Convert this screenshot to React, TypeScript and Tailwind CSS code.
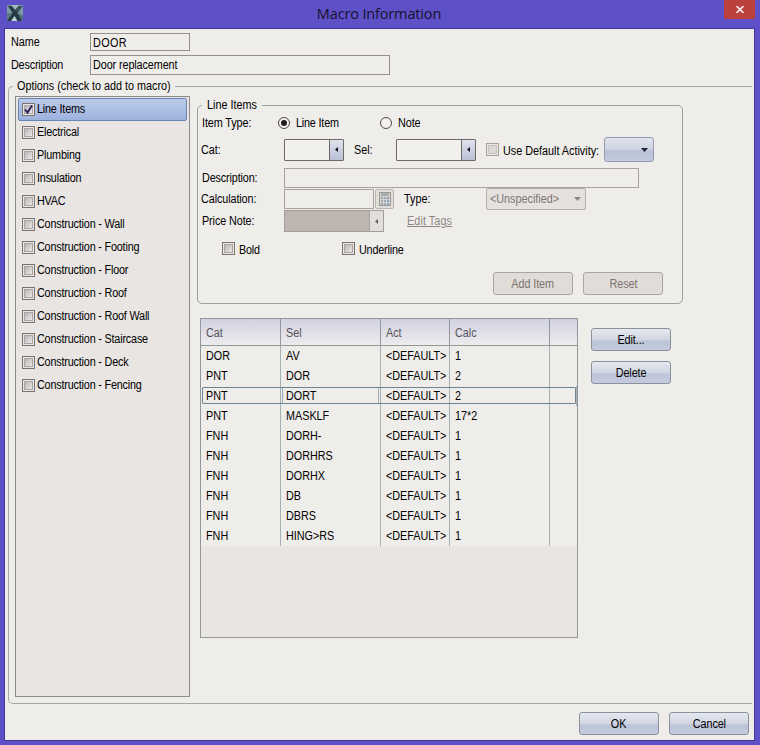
import React, { useState } from 'react';
import clsx from 'clsx';

type LineItem = {
  cat: string;
  sel: string;
  act: string;
  calc: string;
};

const options = [
  'Line Items',
  'Electrical',
  'Plumbing',
  'Insulation',
  'HVAC',
  'Construction - Wall',
  'Construction - Footing',
  'Construction - Floor',
  'Construction - Roof',
  'Construction - Roof Wall',
  'Construction - Staircase',
  'Construction - Deck',
  'Construction - Fencing',
];

const items: LineItem[] = [
  { cat: 'DOR', sel: 'AV', act: '<DEFAULT>', calc: '1' },
  { cat: 'PNT', sel: 'DOR', act: '<DEFAULT>', calc: '2' },
  { cat: 'PNT', sel: 'DORT', act: '<DEFAULT>', calc: '2' },
  { cat: 'PNT', sel: 'MASKLF', act: '<DEFAULT>', calc: '17*2' },
  { cat: 'FNH', sel: 'DORH-', act: '<DEFAULT>', calc: '1' },
  { cat: 'FNH', sel: 'DORHRS', act: '<DEFAULT>', calc: '1' },
  { cat: 'FNH', sel: 'DORHX', act: '<DEFAULT>', calc: '1' },
  { cat: 'FNH', sel: 'DB', act: '<DEFAULT>', calc: '1' },
  { cat: 'FNH', sel: 'DBRS', act: '<DEFAULT>', calc: '1' },
  { cat: 'FNH', sel: 'HING>RS', act: '<DEFAULT>', calc: '1' },
];

type TextProps = {
  children: React.ReactNode;
  className?: string;
};

// narrow dialog text
const Text = ({ children, className, centered }: TextProps & { centered?: boolean }) => (
  <span
    className={clsx(
      'inline-block scale-x-90 whitespace-nowrap leading-[14px]',
      centered ? 'origin-center' : 'origin-left',
      className
    )}
  >
    {children}
  </span>
);

const Checkbox = ({ checked, disabled }: { checked?: boolean; disabled?: boolean }) => (
  <span
    className={clsx(
      'flex size-[13px] shrink-0 items-center justify-center border bg-[#e9e6e4]',
      disabled ? 'border-[#a9a19d]' : 'border-[#7b7370]'
    )}
  >
    <span
      className={clsx(
        'flex size-[9px] items-center justify-center border',
        disabled
          ? 'border-[#c9c2be] bg-[#dcd8d5]'
          : 'border-[#aaa5a4] bg-linear-to-br from-[#b9b6b6] to-[#ebe9e8]'
      )}
    >
      {checked && (
        <svg viewBox="0 0 9 9" className="size-[9px] shrink-0 overflow-visible">
          <path d="M1 4.5 L3.5 7.6 L8 0.5" fill="none" stroke="#2c1f5c" strokeWidth="1.9" />
        </svg>
      )}
    </span>
  </span>
);

const Radio = ({ checked }: { checked?: boolean }) => (
  <span className="flex size-3 shrink-0 items-center justify-center rounded-full border border-[#4d4a4a] bg-[#f3f1ef]">
    {checked && <span className="size-1.5 rounded-full bg-[#221c20]" />}
  </span>
);

const Button = ({ children, disabled }: { children: React.ReactNode; disabled?: boolean }) => (
  <button
    disabled={disabled}
    className={clsx(
      'flex h-[23px] w-20 items-center justify-center rounded-[3px] border',
      disabled
        ? 'border-[#aca6a3] bg-[#e0dcd8] text-[#7b726e]'
        : 'border-[#8a909c] bg-[linear-gradient(#e6e9f0,#d0d5e1_50%,#bcc4d9_58%,#c5cbde)] text-black'
    )}
  >
    <Text centered className="tracking-[-0.1px]">{children}</Text>
  </button>
);

const LeftArrow = ({ className }: { className?: string }) => (
  <svg viewBox="0 0 3 5" className={clsx('h-[5px] w-[3px]', className)}>
    <path d="M3 0 L0 2.5 L3 5 Z" fill="currentColor" />
  </svg>
);

const DownArrow = ({ className }: { className?: string }) => (
  <svg viewBox="0 0 7 4" className={clsx('h-1 w-[7px]', className)}>
    <path d="M0 0 H7 L3.5 4 Z" fill="currentColor" />
  </svg>
);

const Combo = ({ className }: { className?: string }) => (
  <div className={clsx('flex h-[22px] rounded-[1px] border border-[#6e6867] bg-[#f2f0ed]', className)}>
    <div className="flex-1" />
    <div className="flex w-3.5 items-center justify-center border-l border-[#6e6867] bg-linear-to-b from-[#e0e3ec] to-[#b9c0d6]">
      <LeftArrow className="text-[#15131c]" />
    </div>
  </div>
);

const CalculatorIcon = () => (
  <svg viewBox="0 0 12 14" className="h-3.5 w-3" shapeRendering="crispEdges">
    <rect width="12" height="14" fill="#9c9896" />
    <rect x="1" y="1" width="10" height="12" fill="#d5d3d0" />
    <rect x="2" y="1" width="8" height="3" fill="#a9adae" />
    {[5, 8, 11].map((y) =>
      [2, 5, 8].map((x) => (
        <rect key={`${x}-${y}`} x={x} y={y} width="2" height="2" fill={x === 8 ? '#86a0bb' : '#a0a8b6'} />
      ))
    )}
  </svg>
);

const AppLogo = () => (
  <svg viewBox="0 0 16 16" className="size-4">
    <rect width="16" height="16" fill="#71919a" />
    <path d="M0 0 L7 7 L0 10 Z" fill="#7f9a9d" />
    <path d="M4 0 H12 L8 6 Z" fill="#a3b9ba" />
    <path d="M16 0 V10 L9 7 Z" fill="#7d9ba6" />
    <path d="M0 8 L6 8 L2 16 H0 Z" fill="#5d7a86" />
    <path d="M4 16 L8 9 L12 16 Z" fill="#c3d2d6" />
    <path d="M10 8 L16 11 V16 H14 Z" fill="#536f7d" />
    <path d="M1 1 H5 L8 5 L12 1 H15.5 L10.5 8 L15 16 H10.5 L7.5 11 L4 16 H0 L5.5 8 Z" fill="#273b46" />
    <path d="M12 1 H15.5 L10.5 8 L8 5 Z" fill="#3a525c" />
  </svg>
);

const GroupTitle = ({ children, className }: TextProps) => (
  <legend className={clsx('h-3.5 leading-[14px]', className)}>
    <Text>{children}</Text>
  </legend>
);

const OptionsList = () => {
  const [active, setActive] = useState(0);

  return (
    <div className="h-[601px] w-[175px] shrink-0 border border-[#8b8a8d] bg-[#e8e5e3] px-0.5 pt-px">
      {options.map((option, index) => (
        <div
          key={option}
          onClick={() => setActive(index)}
          className={clsx(
            'flex h-[23px] items-center rounded-[2px] border pl-[3px]',
            index === active
              ? 'border-[#6685b4] bg-linear-to-b from-[#bccbe8] to-[#9cb2de]'
              : 'border-transparent'
          )}
        >
          <Checkbox checked={index === 0} />
          <Text className="mb-0.5 ml-0.5 tracking-[-0.2px]">{option}</Text>
        </div>
      ))}
    </div>
  );
};

const LineItemForm = () => (
  <fieldset className="ml-[7px] h-[206px] w-[486px] rounded-[5px] border border-[#98a0a1]">
    <GroupTitle className="ml-1 w-[60px] pl-[5px]">Line Items</GroupTitle>

    <div className="-mt-[3px] flex h-[26px] items-center pt-px pl-1">
      <Text className="mt-px w-[76px] tracking-[-0.1px]">Item Type:</Text>
      <Radio checked />
      <Text className="ml-1.5 w-[84px] tracking-[-0.2px]">Line Item</Text>
      <Radio />
      <Text className="ml-1.5 tracking-[-0.1px]">Note</Text>
    </div>

    <div className="flex h-[29px] items-center pl-[3px]">
      <Text className="w-[83px]">Cat:</Text>
      <Combo className="w-[60px]" />
      <Text className="ml-2.5 w-[42px]">Sel:</Text>
      <Combo className="w-20" />
      <div className="ml-2.5">
        <Checkbox disabled />
      </div>
      <Text className="mt-0.5 ml-1 w-[101px]">Use Default Activity:</Text>
      <button className="flex h-[25px] w-[50px] items-center justify-end rounded-[3px] border border-[#949bae] bg-[linear-gradient(#e0e4ed,#cfd4e1_48%,#b9c1d8_56%,#c3cadd)] pr-[5px] text-[#20243c]">
        <DownArrow />
      </button>
    </div>

    <div className="mt-1 flex h-[21px] items-start pl-1">
      <Text className="mt-[3px] w-[82px] tracking-[-0.15px]">Description:</Text>
      <div className="h-5 w-[355px] border border-[#a8a2a0]" />
    </div>

    <div className="flex h-[21px] items-start pl-[3px]">
      <Text className="mt-[3px] w-[83px] tracking-[-0.1px]">Calculation:</Text>
      <div className="h-5 w-[90px] border border-[#a8a2a0]" />
      <div className="ml-px flex h-5 w-[19px] items-center justify-center rounded-[2px] border border-[#bab4b0] bg-[#e2deda]">
        <CalculatorIcon />
      </div>
      <Text className="mt-[3px] ml-2.5 w-[82px]">Type:</Text>
      <div className="-mt-px flex h-[22px] w-[100px] items-center justify-between rounded-[2px] border border-[#b3aeab] bg-[#e5e1de] pr-1 pl-[3px] text-[#7d7673]">
        <Text>&lt;Unspecified&gt;</Text>
        <DownArrow className="text-[#8d8784]" />
      </div>
    </div>

    <div className="flex h-8 items-start pl-1">
      <Text className="mt-1 w-[82px] tracking-[-0.1px]">Price Note:</Text>
      <div className="flex h-[22px] w-[100px] border border-[#a39c98] bg-[#beb7b1]">
        <div className="flex-1" />
        <div className="flex w-3.5 items-center justify-center border-l border-[#aaa39f] bg-[#e2deda]">
          <LeftArrow className="text-[#69625f]" />
        </div>
      </div>
      <Text className="mt-1 ml-[23px] tracking-[0.1px] text-[#8d8784] underline">Edit Tags</Text>
    </div>

    <div className="flex h-[15px] items-start pl-6">
      <Checkbox />
      <Text className="mt-px ml-1 w-[103px] tracking-[-0.2px]">Bold</Text>
      <Checkbox />
      <Text className="mt-px ml-1 tracking-[-0.2px]">Underline</Text>
    </div>

    <div className="mt-[15px] flex gap-2.5 pl-[295px]">
      <Button disabled>Add Item</Button>
      <Button disabled>Reset</Button>
    </div>
  </fieldset>
);

const columns = 'grid grid-cols-[80px_100px_69px_100px_1fr]';

const ItemsTable = () => {
  const [selected, setSelected] = useState(2);

  return (
    <div className="h-80 w-[378px] border border-[#92979a] bg-[#e8e5e3]">
      <div className={clsx(columns, 'h-[27px] border-b border-[#92979a] bg-linear-to-b from-[#d0d0e2] to-[#eeecec] text-[#55525a]')}>
        {['Cat', 'Sel', 'Act', 'Calc', ''].map((head, index) => (
          <div key={index} className="flex items-center border-r border-[#92979a] pt-0.5 pl-[5px] last:border-r-0">
            <Text>{head}</Text>
          </div>
        ))}
      </div>
      {items.map((item, index) => (
        <div key={index} onClick={() => setSelected(index)} className={clsx(columns, 'relative h-5 bg-[#efedea]')}>
          {[item.cat, item.sel, item.act, item.calc, ''].map((value, cell) => (
            <div key={cell} className="flex items-center border-r border-[#a5b0b5] pl-[5px] last:border-r-0">
              <Text>{value}</Text>
            </div>
          ))}
          {index === selected && (
            <div className="absolute top-px right-px bottom-0.5 left-px flex rounded-[1px] border border-[#6f8490]">
              <div className="w-[80px] border-r border-[#9dabb2]" />
              <div className="w-[96px] border-r border-[#9dabb2]" />
            </div>
          )}
        </div>
      ))}
    </div>
  );
};

const App = () => {
  return (
    <div className="flex h-[745px] w-[760px] flex-col bg-[#5e50c6] font-['Liberation_Sans',Arial,sans-serif] text-[12px] text-black">
      <header className="flex h-7 shrink-0 items-start justify-between pr-[5px] pl-[7px]">
        <div className="w-[31px] pt-[5px]">
          <AppLogo />
        </div>
        <h1 className="pt-1 pr-1 font-['Open_Sans','Noto_Sans',sans-serif] text-[14.5px] leading-5 tracking-[-0.15px] text-[#15102c]">
          Macro Information
        </h1>
        <button className="flex h-[19px] w-[31px] items-center justify-center bg-[#bb423c]">
          <svg viewBox="0 0 8 7" className="h-[7px] w-2">
            <path d="M0.5 0 L7.5 7 M7.5 0 L0.5 7" stroke="#f7e4e6" strokeWidth="1.6" />
          </svg>
        </button>
      </header>

      <main className="mr-[5px] mb-1 ml-1 flex flex-1 flex-col border border-[#45379a] bg-[#efedea]">
        <div className="mt-1 flex h-[18px] items-center pl-1.5">
          <Text className="w-[79px]">Name</Text>
          <div className="flex h-[18px] w-[100px] items-center border border-[#96908e] pt-px pl-0.5">
            <Text className="tracking-[0.4px]">DOOR</Text>
          </div>
        </div>
        <div className="mt-1 flex h-5 items-center pl-1.5">
          <Text className="w-[79px] tracking-[-0.2px]">Description</Text>
          <div className="flex h-5 w-[300px] items-center border border-[#96908e] pl-0.5">
            <Text className="tracking-[-0.1px]">Door replacement</Text>
          </div>
        </div>

        <fieldset className="mt-1 ml-[3px] h-[625px] w-[744px] rounded-l-[5px] border border-r-0 border-[#a3a9a9]">
          <GroupTitle className="ml-1 w-[162px] pl-1">Options (check to add to macro)</GroupTitle>
          <div className="-mt-[3px] flex pt-[6px] pl-1.5">
            <OptionsList />
            <div className="pt-0.5">
              <LineItemForm />
              <div className="mt-3.5 ml-2.5 flex gap-[13px]">
                <ItemsTable />
                <div className="flex flex-col gap-2.5 pt-2.5">
                  <Button>Edit...</Button>
                  <Button>Delete</Button>
                </div>
              </div>
            </div>
          </div>
        </fieldset>

        <div className="mt-2 flex justify-end gap-2.5 pr-[5px]">
          <Button>OK</Button>
          <Button>Cancel</Button>
        </div>
      </main>
    </div>
  );
};

export default App;
